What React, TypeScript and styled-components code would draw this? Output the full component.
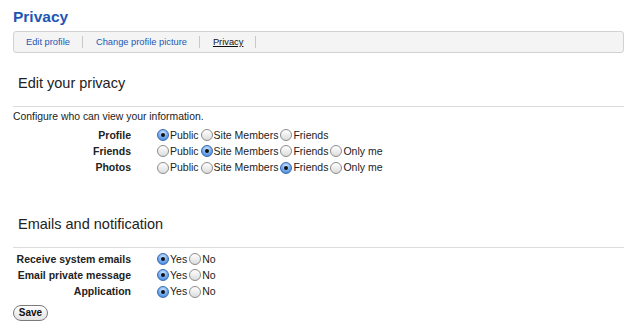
import React from "react";
import styled, { createGlobalStyle } from "styled-components";

const GlobalStyle = createGlobalStyle`
  body {
    margin: 0;
    background: #fff;
    font-family: "Liberation Sans", Arial, sans-serif;
    color: #222;
  }
`;

const Page = styled.div`
  padding: 7px 16px 0 13px;
  width: 611px;
`;

const Title = styled.h1`
  margin: 0;
  font-size: 15.5px;
  font-weight: bold;
  color: #1d57b4;
  line-height: 19px;
`;

const TabBar = styled.div`
  margin-top: 5px;
  height: 20px;
  border: 1px solid #d2d2d2;
  border-radius: 3px;
  background: #f4f4f4;
  display: flex;
  align-items: center;
  padding-left: 12px;
  font-size: 9.3px;
`;

const Tab = styled.a<{ active?: boolean }>`
  color: ${(p) => (p.active ? "#111" : "#1d57b4")};
  text-decoration: ${(p) => (p.active ? "underline" : "none")};
  padding-right: 12px;
  margin-right: 13px;
  border-right: 1px solid #c8c8c8;
  line-height: 12px;
`;

const SectionTitle = styled.h2<{ gap: number }>`
  margin: ${(p) => p.gap}px 0 0 5px;
  font-size: 14.5px;
  font-weight: normal;
  color: #222;
  line-height: 18px;
`;

const Rule = styled.hr`
  margin: 14px 0 0;
  border: 0;
  border-top: 1px solid #dcdcdc;
`;

const Intro = styled.p`
  margin: 3px 0 4px;
  font-size: 10.4px;
  line-height: 13px;
`;

const Form = styled.div<{ top: number }>`
  margin-top: ${(p) => p.top}px;
  display: grid;
  grid-template-columns: 118px auto;
  grid-auto-rows: 16.3px;
  column-gap: 26px;
  align-items: center;
`;

const Label = styled.div`
  text-align: right;
  white-space: nowrap;
  font-size: 10.5px;
  font-weight: bold;
  color: #222;
  line-height: 13px;
`;

const Choices = styled.div`
  display: flex;
  align-items: center;
  font-size: 10.5px;
  line-height: 13px;
`;

const Choice = styled.label`
  display: flex;
  align-items: center;
  margin-right: 2px;
`;

const Dot = styled.span<{ checked?: boolean }>`
  width: 12px;
  height: 12px;
  box-sizing: border-box;
  border-radius: 50%;
  margin-right: 1px;
  display: inline-flex;
  align-items: center;
  justify-content: center;
  border: 1px solid ${(p) => (p.checked ? "#3a6ab0" : "#8c8c8c")};
  background: ${(p) =>
    p.checked
      ? "radial-gradient(circle at 50% 30%, #cfe6ff 0%, #6fa8ee 55%, #3b7fd8 100%)"
      : "linear-gradient(#ffffff, #dcdcdc)"};
  &::after {
    content: "";
    display: ${(p) => (p.checked ? "block" : "none")};
    width: 4px;
    height: 4px;
    border-radius: 50%;
    background: #111;
  }
`;

const SaveButton = styled.button`
  display: block;
  margin-top: 5px;
  font-family: "Liberation Sans Narrow", "Liberation Sans", Arial, sans-serif;
  font-size: 10px;
  font-weight: bold;
  color: #111;
  width: 35px;
  height: 16px;
  padding: 0;
  border: 1px solid #7a7a7a;
  border-radius: 8px;
  background: linear-gradient(#ffffff, #e4e4e4);
  line-height: 12px;
`;

type Row = { label: string; options: string[]; selected: number };

const privacyRows: Row[] = [
  { label: "Profile", options: ["Public", "Site Members", "Friends"], selected: 0 },
  { label: "Friends", options: ["Public", "Site Members", "Friends", "Only me"], selected: 1 },
  { label: "Photos", options: ["Public", "Site Members", "Friends", "Only me"], selected: 2 },
];

const emailRows: Row[] = [
  { label: "Receive system emails", options: ["Yes", "No"], selected: 0 },
  { label: "Email private message", options: ["Yes", "No"], selected: 0 },
  { label: "Application", options: ["Yes", "No"], selected: 0 },
];

const Rows = ({ rows, top }: { rows: Row[]; top: number }) => (
  <Form top={top}>
    {rows.map((row) => (
      <React.Fragment key={row.label}>
        <Label>{row.label}</Label>
        <Choices>
          {row.options.map((opt, i) => (
            <Choice key={opt}>
              <Dot checked={i === row.selected} />
              {opt}
            </Choice>
          ))}
        </Choices>
      </React.Fragment>
    ))}
  </Form>
);

export default function App() {
  return (
    <Page>
      <GlobalStyle />
      <Title>Privacy</Title>
      <TabBar>
        <Tab>Edit profile</Tab>
        <Tab>Change profile picture</Tab>
        <Tab active>Privacy</Tab>
      </TabBar>

      <SectionTitle gap={21}>Edit your privacy</SectionTitle>
      <Rule />
      <Intro>Configure who can view your information.</Intro>
      <Rows rows={privacyRows} top={0} />

      <SectionTitle gap={39}>Emails and notification</SectionTitle>
      <Rule />
      <Rows rows={emailRows} top={3} />
      <SaveButton>Save</SaveButton>
    </Page>
  );
}
